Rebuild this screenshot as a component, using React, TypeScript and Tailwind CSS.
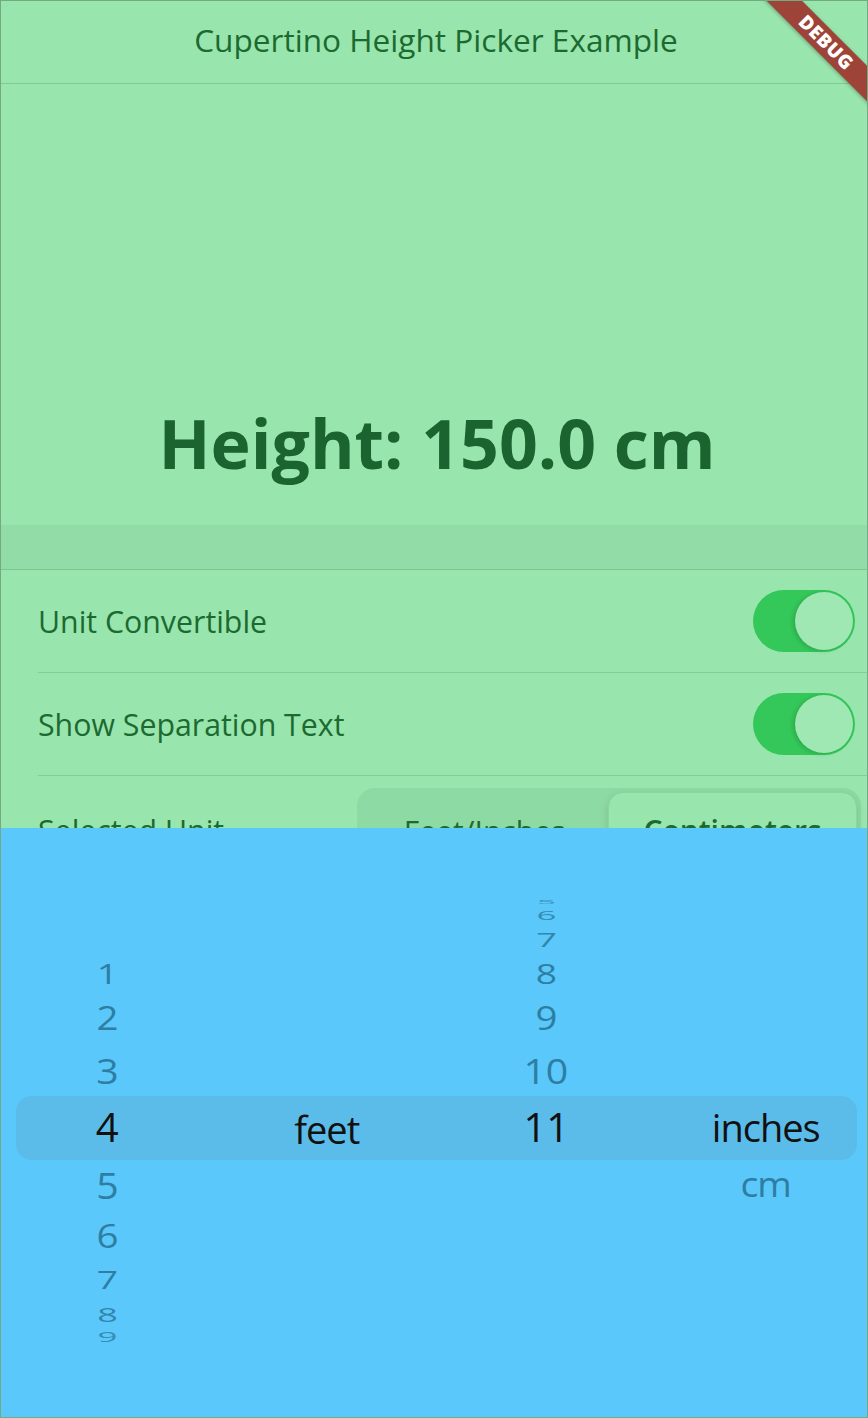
import React from "react";

type Item = { t: string; dy: number; sy: number; sx: number; sel?: boolean; o?: number; word?: boolean };

const col1: Item[] = [
  { t: "1", dy: 146, sy: 0.66, sx: 0.93 },
  { t: "2", dy: 44, sy: 0.81, sx: 0.96 },
  { t: "3", dy: 53, sy: 0.88, sx: 0.98 },
  { t: "4", dy: 56, sy: 1, sx: 1, sel: true },
  { t: "5", dy: 58, sy: 0.9, sx: 0.98 },
  { t: "6", dy: 51, sy: 0.81, sx: 0.96 },
  { t: "7", dy: 43, sy: 0.65, sx: 0.93 },
  { t: "8", dy: 35, sy: 0.5, sx: 0.9, o: 0.9 },
  { t: "9", dy: 23, sy: 0.35, sx: 0.87, o: 0.8 },
];

const col2: Item[] = [{ t: "feet", dy: 301, sy: 1, sx: 1, sel: true, word: true }];

const col3: Item[] = [
  { t: "5", dy: 74, sy: 0.14, sx: 0.85, o: 0.7 },
  { t: "6", dy: 13, sy: 0.33, sx: 0.87, o: 0.8 },
  { t: "7", dy: 24, sy: 0.52, sx: 0.9, o: 0.9 },
  { t: "8", dy: 35, sy: 0.66, sx: 0.93 },
  { t: "9", dy: 44, sy: 0.81, sx: 0.96 },
  { t: "10", dy: 53, sy: 0.88, sx: 0.98 },
  { t: "11", dy: 56, sy: 1, sx: 1, sel: true },
];

const col4: Item[] = [
  { t: "inches", dy: 299, sy: 1, sx: 1, sel: true, word: true },
  { t: "cm", dy: 56, sy: 0.9, sx: 0.98, word: true },
];

function Wheel({ items, className }: { items: Item[]; className?: string }) {
  return (
    <div className={`flex flex-col ${className ?? ""}`}>
      {items.map((it, i) => (
        <div
          key={i}
          className="h-0 flex items-center justify-center"
          style={{ marginTop: it.dy }}
        >
          <span
            className={`block leading-none whitespace-nowrap ${
              it.word ? "text-[38px] tracking-[-1px]" : "text-[40px]"
            } ${it.sel ? "text-[#111111]" : "text-[#2e7ea3]"}`}
            style={{ transform: `scale(${it.sx}, ${it.sy})`, opacity: it.o ?? 1 }}
          >
            {it.t}
          </span>
        </div>
      ))}
    </div>
  );
}

function Toggle() {
  return (
    <div className="w-[102px] h-[62px] rounded-full bg-[#34c759] p-[2px] flex justify-end items-center">
      <div className="w-[58px] h-[58px] rounded-full bg-[#9fe8b4] shadow-[-2px_1px_4px_rgba(0,0,0,0.15)]" />
    </div>
  );
}

export default function App() {
  return (
    <div className="relative w-[868px] h-[1418px] overflow-hidden border border-black/25 bg-[#98e5ae] font-['Open_Sans',sans-serif]">
      {/* Header */}
      <div className="h-[83px] border-b border-[#84c898] flex items-center justify-center pb-[5px] pl-[4px]">
        <span className="text-[31.6px] leading-none text-[#1d6a30]">
          Cupertino Height Picker Example
        </span>
      </div>

      {/* Height display */}
      <div className="h-[441px] flex justify-center pt-[325px] pl-[6px]">
        <span className="text-[68px] leading-none font-bold text-[#1b642f]">
          Height: 150.0 cm
        </span>
      </div>

      {/* Section strip */}
      <div className="h-[45px] bg-[#91dca7] border-b border-[#7fc492]" />

      {/* Rows */}
      <div className="pl-[37px]">
        <div className="h-[103px] border-b border-[#83cd99] flex items-center justify-between pr-[12px]">
          <span className="text-[30.3px] leading-none text-[#1d6a30] mt-[3px]">Unit Convertible</span>
          <Toggle />
        </div>
      </div>
      <div className="pl-[37px]">
        <div className="h-[103px] border-b border-[#83cd99] flex items-center justify-between pr-[12px]">
          <span className="text-[30.3px] leading-none text-[#1d6a30] mt-[3px]">Show Separation Text</span>
          <Toggle />
        </div>
      </div>
      <div className="pl-[37px] h-[52px] overflow-hidden">
        <div className="h-[110px] flex items-center justify-between pr-[6px]">
          <span className="text-[30.3px] leading-none text-[#1d6a30]">Selected Unit</span>
          <div className="w-[504px] h-[86px] rounded-[18px] bg-[#8edaa4] p-[4px] flex">
            <div className="flex-1 flex items-center justify-center text-[30px] leading-none text-[#1d6a30]">
              Feet/Inches
            </div>
            <div className="flex-1 rounded-[15px] bg-[#98e5ae] border border-[#89d69f] shadow-[0_3px_8px_rgba(0,0,0,0.12)] flex items-center justify-center text-[30px] leading-none font-semibold text-[#1d6a30]">
              Centimeters
            </div>
          </div>
        </div>
      </div>

      {/* Picker sheet */}
      <div className="relative h-[589px] bg-[#5ac8fa]">
        <div className="absolute left-[15px] right-[10px] top-[268px] h-[64px] rounded-[16px] bg-[#5bbce9]" />
        <div className="relative grid grid-cols-4">
          <Wheel items={col1} className="pr-[4px]" />
          <Wheel items={col2} className="pl-[2px]" />
          <Wheel items={col3} className="pl-[8px]" />
          <Wheel items={col4} className="pl-[14px]" />
        </div>
      </div>

      {/* Debug banner */}
      <div className="absolute left-[705px] top-[29px] w-[240px] h-[25px] rotate-45 bg-[#9e4337] shadow-[0_1px_4px_rgba(0,0,0,0.3)] flex items-center justify-center">
        <span className="text-white text-[19px] font-extrabold leading-none tracking-[0.5px]">DEBUG</span>
      </div>
    </div>
  );
}
